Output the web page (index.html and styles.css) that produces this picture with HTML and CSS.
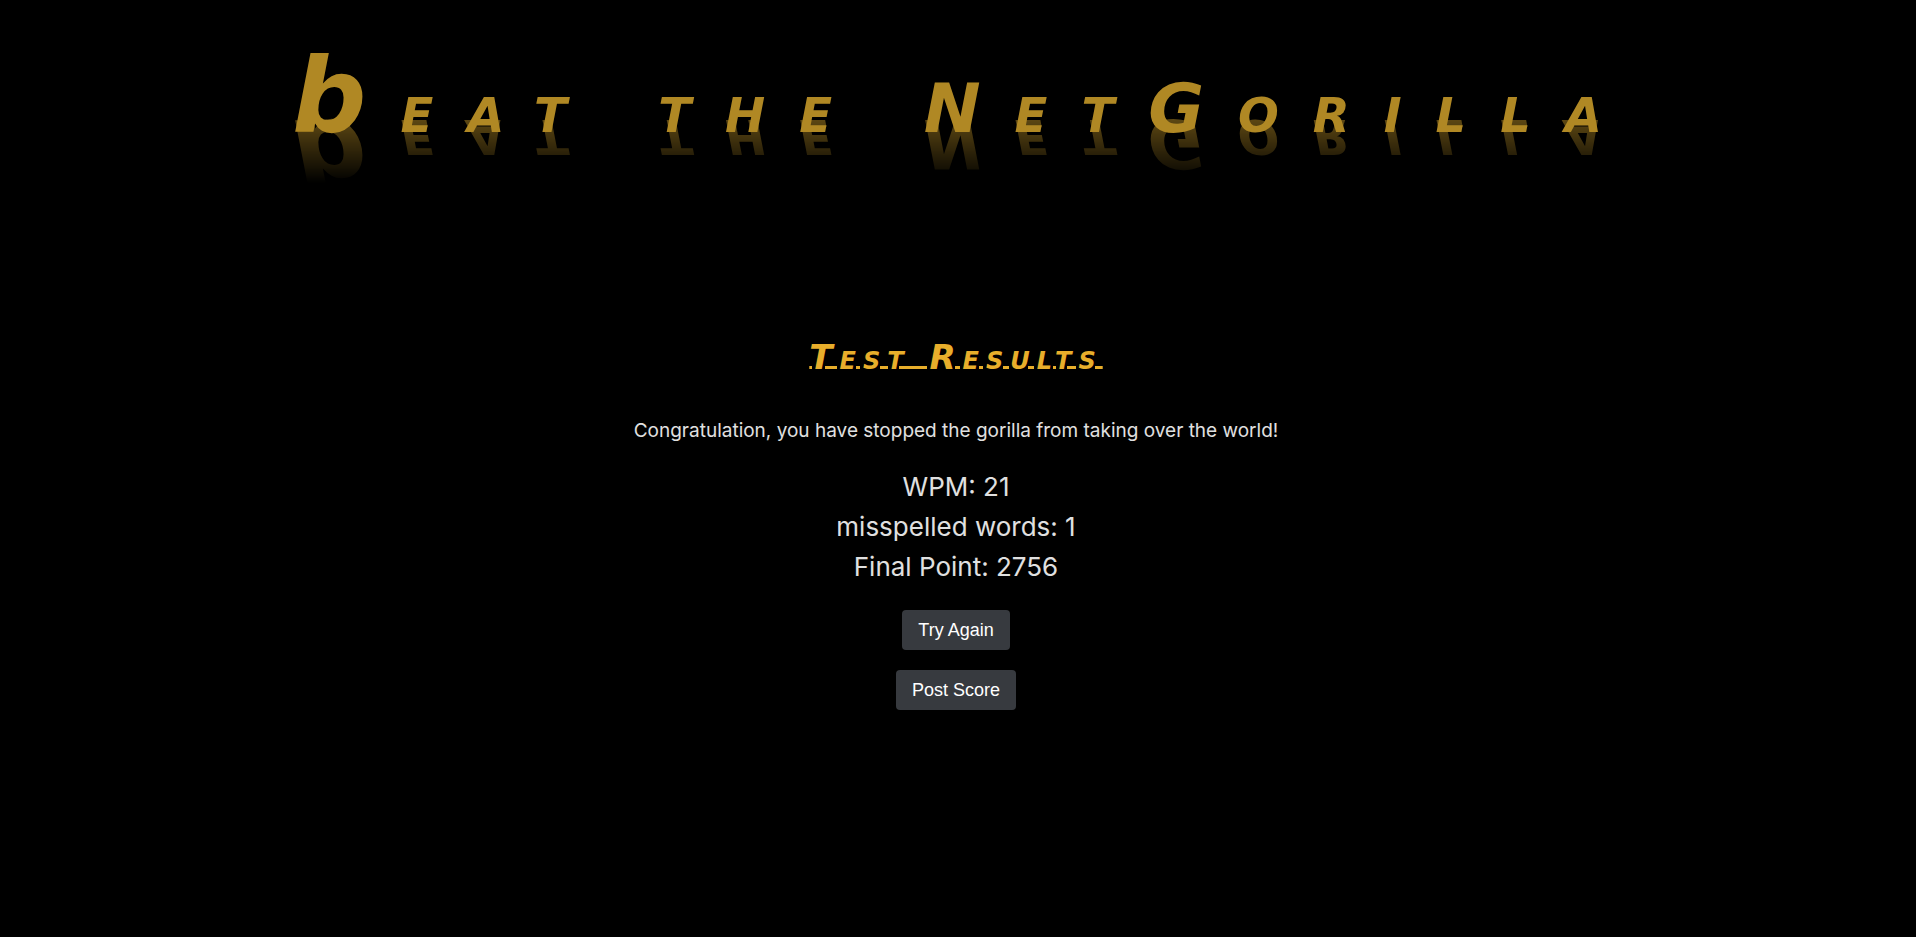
FILE: index.html
```html
<!DOCTYPE html>
<html lang="en">
<head>
  <meta charset="utf-8">
  <title>Beat the NetGorilla</title>
  <link rel="stylesheet" href="styles.css">
</head>
<body>
  <header class="banner">
    <h1 class="title"><span class="initial">b</span>eat the NetGorilla</h1>
  </header>
  <main class="results">
    <h2 class="heading">Test Results</h2>
    <p class="message">Congratulation, you have stopped the gorilla from taking over the world!</p>
    <div class="stats">
      <div>WPM: 21</div>
      <div>misspelled words: 1</div>
      <div>Final Point: 2756</div>
    </div>
    <button class="button" type="button">Try Again</button>
    <button class="button" type="button">Post Score</button>
  </main>
</body>
</html>
```
FILE: styles.css
```css
body {
  margin: 0;
  padding-right: 4px;
  background: #000;
  color: #e0e0e0;
  font-family: Inter, "Liberation Sans", sans-serif;
}

.banner {
  padding: 44px 0 0 16px;
  text-align: center;
}

.title {
  margin: 0;
  color: #b08824;
  font: italic 700 68px/120px "DejaVu Sans", sans-serif;
  font-variant: small-caps;
  letter-spacing: 34px;
  white-space: nowrap;
  -webkit-box-reflect: below -86px linear-gradient(transparent 20%, rgba(0, 0, 0, 0.6) 78%);
}

.initial {
  font-size: 104px;
  font-variant: normal;
  line-height: 1;
}

.results {
  display: flex;
  flex-direction: column;
  align-items: center;
  padding-top: 164px;
}

.heading {
  margin: 0 0 34px;
  color: #e8ae2b;
  font: italic 700 34px/48px "DejaVu Sans", sans-serif;
  font-variant: small-caps;
  letter-spacing: 7px;
  text-decoration: underline 3px;
  text-underline-offset: -3px;
}

.message {
  margin: 0 0 20px;
  font-size: 19px;
  line-height: 32px;
}

.stats {
  margin-bottom: 23px;
  font-size: 26px;
  line-height: 40px;
  text-align: center;
}

.button {
  height: 40px;
  margin-bottom: 20px;
  padding: 0 16px;
  border: 0;
  border-radius: 4px;
  background: #373a3f;
  color: #fff;
  font: 18px "Liberation Sans", sans-serif;
}
```
